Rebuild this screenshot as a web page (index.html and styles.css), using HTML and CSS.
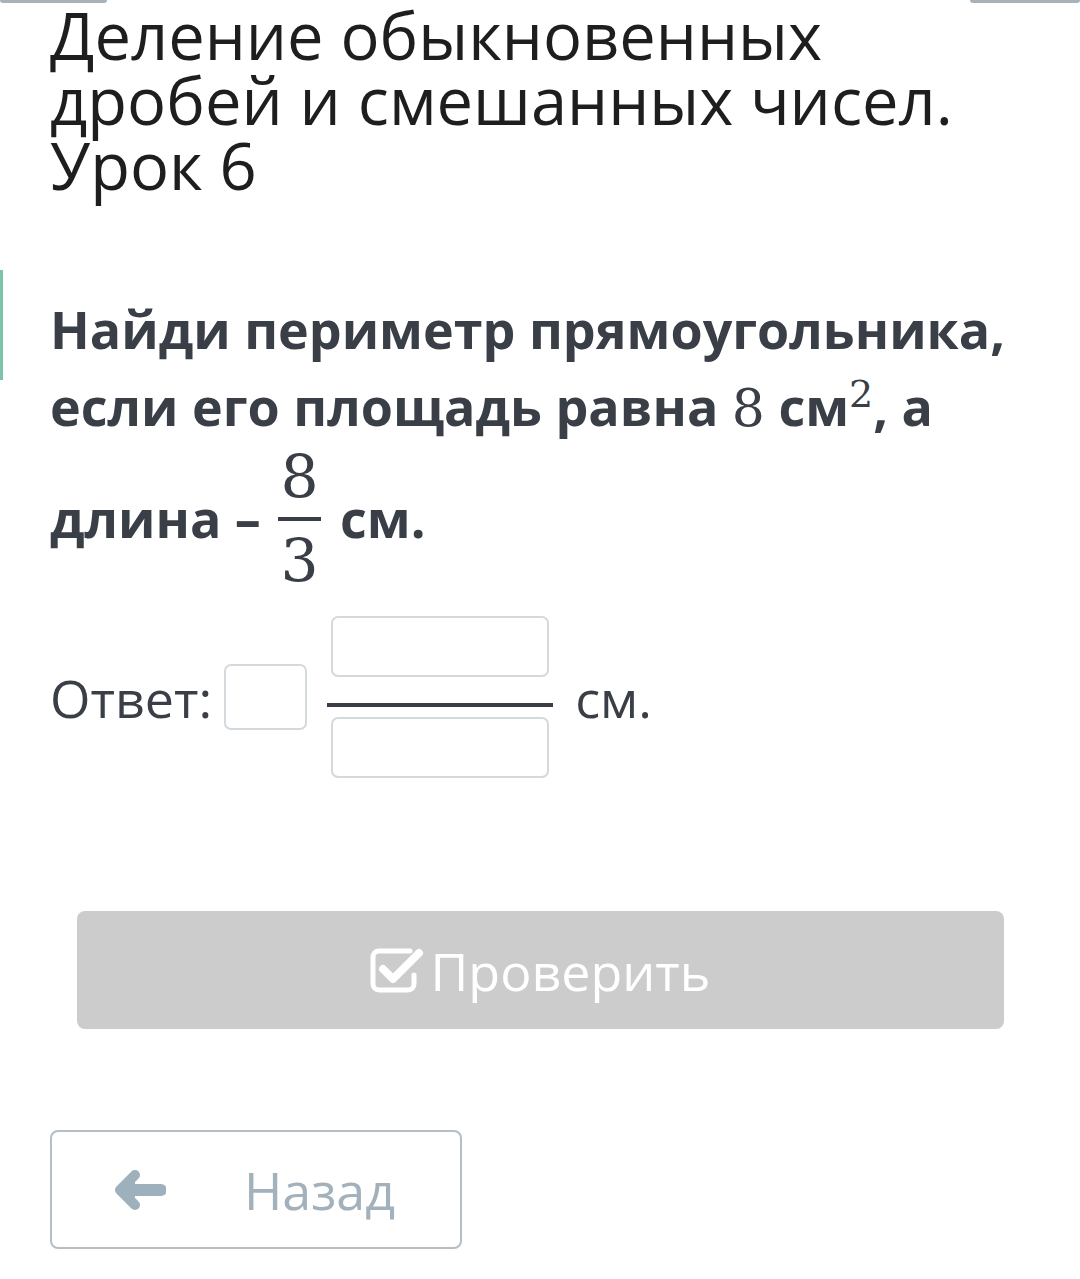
FILE: index.html
```html
<!DOCTYPE html>
<html lang="ru">
<head>
  <meta charset="UTF-8">
  <title>Деление обыкновенных дробей и смешанных чисел. Урок 6</title>
  <link rel="stylesheet" href="styles.css">
</head>
<body>
  <div class="top-tabs">
    <span class="tab tab-left"></span>
    <span class="tab tab-right"></span>
  </div>

  <div class="lesson">
    <h1 class="lesson-title">Деление обыкновенных дробей и смешанных чисел. Урок 6</h1>

    <div class="task">
      <span class="task-mark"></span>
      <p class="task-text">
        Найди периметр прямоугольника, если его площадь равна <span class="math">8</span> см<sup class="math">2</sup>, а
        длина – <span class="frac"><span class="num math">8</span><span class="den math">3</span></span> см.
      </p>

      <div class="answer">
        <span class="answer-label">Ответ:</span>
        <input class="box box-whole" type="text">
        <span class="answer-frac">
          <input class="box box-part" type="text">
          <span class="answer-line"></span>
          <input class="box box-part" type="text">
        </span>
        <span class="answer-unit">см.</span>
      </div>
    </div>

    <button class="check-btn">
      <svg class="check-icon" viewBox="0 0 54 46" width="54" height="46">
        <path d="M40 4 H9 a6 6 0 0 0 -6 6 v27 a6 6 0 0 0 6 6 h29 a6 6 0 0 0 6 -6 v-9" fill="none" stroke="#fff" stroke-width="5" stroke-linecap="round"/>
        <path d="M13 22 L23 32 L49 6" fill="none" stroke="#fff" stroke-width="8" stroke-linecap="round" stroke-linejoin="round"/>
      </svg>Проверить
    </button>

    <button class="back-btn">
      <svg class="back-icon" viewBox="0 0 52 42" width="52" height="42">
        <path d="M21 6 L6 21 L21 36" fill="#9fb0bd" stroke="#9fb0bd" stroke-width="10" stroke-linecap="round" stroke-linejoin="round"/>
        <path d="M10 21 H47" fill="none" stroke="#9fb0bd" stroke-width="12" stroke-linecap="round"/>
      </svg>
      <span>Назад</span>
    </button>
  </div>
</body>
</html>
```

FILE: styles.css
```css
body {
  margin: 0;
  background: #fff;
  font-family: 'Open Sans', 'Noto Sans', sans-serif;
  color: #3a3f47;
}
.top-tabs {
  display: flex;
  justify-content: space-between;
  height: 3px;
}
.tab {
  display: block;
  height: 3px;
  background: #a7b2ba;
  border-radius: 0 0 4px 4px;
}
.tab-left { width: 107px; }
.tab-right { width: 110px; }

.lesson {
  padding: 0 50px;
}
.lesson-title {
  margin: 0;
  font-size: 65px;
  font-weight: 400;
  line-height: 65px;
  color: #1e1e1e;
  width: 975px;
}

.task {
  position: relative;
  margin-top: 72px;
}
.task-mark {
  position: absolute;
  left: -50px;
  top: 0;
  width: 3px;
  height: 110px;
  background: #7cc5a8;
}
.task-text {
  margin: 0;
  padding-top: 20px;
  font-size: 52px;
  font-weight: 700;
  line-height: 77px;
  color: #3a3f47;
}
.math {
  font-family: 'DejaVu Serif', 'Liberation Serif', serif;
  font-weight: 400;
}
.task-text sup {
  font-size: 38px;
  line-height: 0;
  vertical-align: 19px;
}
.frac {
  display: inline-flex;
  flex-direction: column;
  align-items: center;
  vertical-align: middle;
  margin: 0 6px 10px 4px;
  font-size: 60px;
  line-height: 60px;
}
.frac .num {
  padding: 0 2px 10px;
  border-bottom: 4px solid #3a3f47;
}
.frac .den {
  padding-top: 10px;
}

.answer {
  display: flex;
  align-items: center;
  margin-top: 15px;
  font-size: 52px;
}
.answer-label {
  margin-right: 12px;
}
.box {
  box-sizing: border-box;
  border: 2px solid #d3d9dc;
  border-radius: 7px;
  background: #fff;
  padding: 0;
}
.box-whole {
  width: 83px;
  height: 66px;
}
.answer-frac {
  display: flex;
  flex-direction: column;
  align-items: center;
  margin-left: 20px;
  width: 226px;
}
.box-part {
  width: 218px;
  height: 61px;
}
.answer-line {
  display: block;
  width: 226px;
  height: 4px;
  background: #3a3f47;
  margin: 26px 0 10px;
}
.answer-unit {
  margin-left: 22px;
}

.check-btn {
  display: flex;
  align-items: center;
  justify-content: center;
  width: 927px;
  height: 118px;
  margin: 133px 0 0 27px;
  border: none;
  border-radius: 8px;
  background: #cccccc;
  color: #fff;
  font-family: 'Open Sans', 'Noto Sans', sans-serif;
  font-size: 52px;
  padding: 0;
}
.check-icon {
  margin-right: 6px;
}

.back-btn {
  display: flex;
  align-items: center;
  width: 412px;
  height: 119px;
  margin-top: 101px;
  border: 2px solid #b5bec5;
  border-radius: 8px;
  background: #fff;
  color: #a3b1bc;
  font-family: 'Open Sans', 'Noto Sans', sans-serif;
  font-size: 52px;
  padding: 0 0 0 62px;
}
.back-icon {
  margin-right: 78px;
}
```
